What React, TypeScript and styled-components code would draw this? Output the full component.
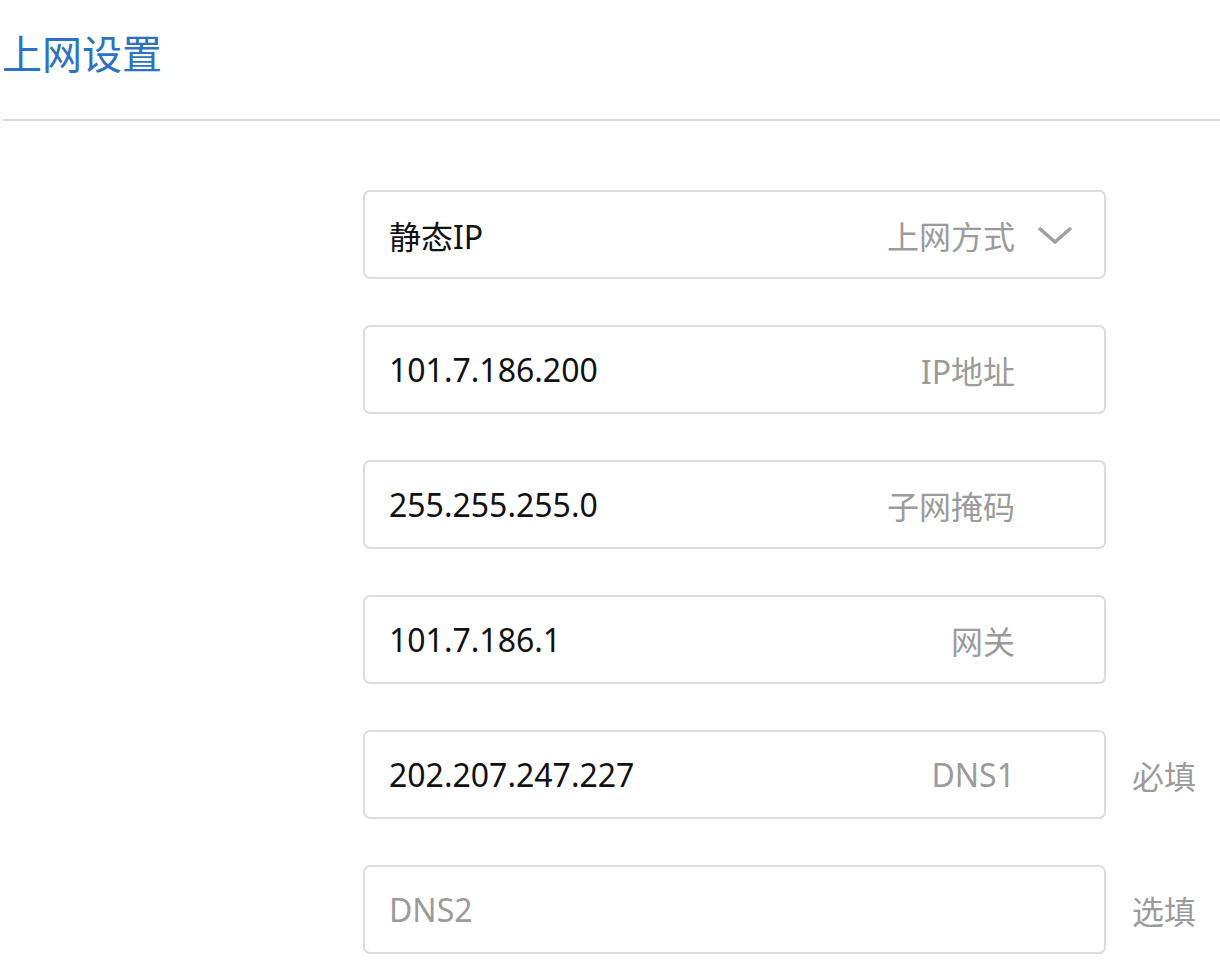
import React from "react";
import styled, { createGlobalStyle } from "styled-components";

const Global = createGlobalStyle`
  html, body { margin: 0; padding: 0; background: #fff; }
  body { font-family: "Noto Sans", "Noto Sans CJK SC", sans-serif; }
`;

const Page = styled.div`
  width: 1220px;
  padding-left: 3px;
  box-sizing: border-box;
`;

const Header = styled.div`
  height: 119px;
  display: flex;
  align-items: flex-start;
  border-bottom: 2px solid #d9d9d9;
  box-sizing: content-box;
`;

const Title = styled.h1`
  margin: 24px 0 0 -1px;
  font-size: 40px;
  font-weight: 400;
  line-height: 56px;
  color: #2b73c2;
  font-family: "Noto Sans CJK SC", sans-serif;
`;

const Form = styled.div`
  display: flex;
  flex-direction: column;
  gap: 46px;
  padding: 69px 0 0 360px;
`;

const Row = styled.div`
  display: flex;
  align-items: center;
`;

const Box = styled.div`
  width: 743px;
  height: 89px;
  box-sizing: border-box;
  border: 2px solid #dcdcdc;
  border-radius: 7px;
  display: flex;
  align-items: center;
  padding: 0 89px 0 24px;
  position: relative;
`;

const Value = styled.span<{ $placeholder?: boolean }>`
  flex: 1;
  font-size: 32px;
  color: ${(p) => (p.$placeholder ? "#9b9b9b" : "#111")};
  font-family: "Noto Sans", "Noto Sans CJK SC", sans-serif;
`;

const Label = styled.span`
  font-size: 32px;
  color: #9b9b9b;
  font-family: "Noto Sans", "Noto Sans CJK SC", sans-serif;
`;

const Chevron = styled.svg`
  position: absolute;
  right: 31px;
  top: 50%;
  transform: translateY(-50%);
  width: 36px;
  height: 20px;
`;

const Side = styled.span`
  margin-left: 26px;
  font-size: 32px;
  color: #9b9b9b;
  font-family: "Noto Sans CJK SC", sans-serif;
`;

const rows: { value: string; label?: string; placeholder?: boolean; side?: string; select?: boolean }[] = [
  { value: "静态IP", label: "上网方式", select: true },
  { value: "101.7.186.200", label: "IP地址" },
  { value: "255.255.255.0", label: "子网掩码" },
  { value: "101.7.186.1", label: "网关" },
  { value: "202.207.247.227", label: "DNS1", side: "必填" },
  { value: "DNS2", placeholder: true, side: "选填" },
];

export default function App() {
  return (
    <Page>
      <Global />
      <Header>
        <Title>上网设置</Title>
      </Header>
      <Form>
        {rows.map((r, i) => (
          <Row key={i}>
            <Box>
              <Value $placeholder={r.placeholder}>{r.value}</Value>
              {r.label && <Label>{r.label}</Label>}
              {r.select && (
                <Chevron viewBox="0 0 36 20">
                  <polyline points="2,3 18,17 34,3" fill="none" stroke="#a0a0a0" strokeWidth="3.5" />
                </Chevron>
              )}
            </Box>
            {r.side && <Side>{r.side}</Side>}
          </Row>
        ))}
      </Form>
    </Page>
  );
}
